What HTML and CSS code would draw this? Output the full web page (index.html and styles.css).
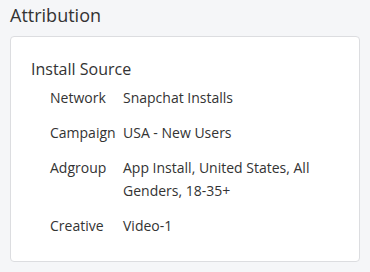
FILE: index.html
```html
<!DOCTYPE html>
<html lang="en">
<head>
    <meta charset="UTF-8">
    <meta name="viewport" content="width=device-width, initial-scale=1.0">
    <title>Attribution</title>
    <link rel="stylesheet" href="styles.css">
</head>
<body>

<div class="section">
    <h2>Attribution</h2>
    <div class="card">
        <h3>Install Source</h3>
        <dl class="details">
            <dt>Network</dt>
            <dd>Snapchat Installs</dd>
            <dt>Campaign</dt>
            <dd>USA - New Users</dd>
            <dt>Adgroup</dt>
            <dd>App Install, United States, All Genders, 18-35+</dd>
            <dt>Creative</dt>
            <dd>Video-1</dd>
        </dl>
    </div>
</div>

</body>
</html>
```

FILE: styles.css
```css
* {
    margin: 0;
    padding: 0;
    box-sizing: border-box;
}

body {
    font-family: 'Open Sans', sans-serif;
    background-color: #f5f6f8;
    color: #333;
    padding: 0 10px;
}

h2 {
    font-size: 18px;
    font-weight: normal;
    line-height: 24px;
    padding-top: 3px;
    margin-bottom: 9px;
}

.card {
    background: white;
    border: 1px solid #dcdde0;
    border-radius: 4px;
    padding: 21px 20px 24px;
    width: 350px;
}

h3 {
    font-size: 16px;
    font-weight: normal;
    line-height: 22px;
    margin-bottom: 6px;
}

.details {
    display: grid;
    grid-template-columns: 73px 1fr;
    row-gap: 12px;
    padding-left: 19px;
    font-size: 14px;
    line-height: 23px;
}
```
